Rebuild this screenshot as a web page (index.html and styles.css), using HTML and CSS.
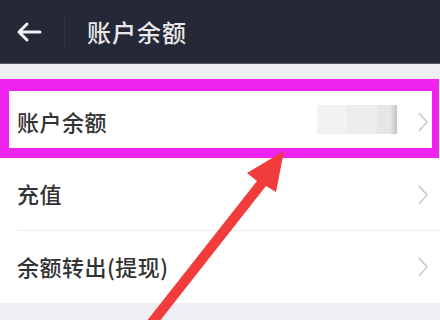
FILE: index.html
```html
<!DOCTYPE html>
<html lang="zh">
<head>
<meta charset="utf-8">
<link rel="stylesheet" href="styles.css">
</head>
<body>
<div class="page">
  <header class="topbar">
    <div class="back">
      <svg width="26" height="22" viewBox="0 0 26 22"><path d="M24 11H3M11 3L3 11L11 19" fill="none" stroke="#f2f2f2" stroke-width="3" stroke-linecap="round" stroke-linejoin="round"/></svg>
    </div>
    <div class="sep"></div>
    <div class="title">账户余额</div>
  </header>
  <div class="strip"></div>
  <ul class="list">
    <li class="row first">
      <span class="label">账户余额</span>
      <span class="blur"><i class="b1"></i><i class="b2"></i><i class="b3"></i></span>
      <svg class="chev" width="12" height="22" viewBox="0 0 12 22"><path d="M2 2L10 11L2 20" fill="none" stroke="#c9c9cc" stroke-width="1.6"/></svg>
      <div class="highlight"></div>
    </li>
    <li class="row divided">
      <span class="label">充值</span>
      <svg class="chev" width="12" height="22" viewBox="0 0 12 22"><path d="M2 2L10 11L2 20" fill="none" stroke="#c9c9cc" stroke-width="1.6"/></svg>
    </li>
    <li class="row">
      <span class="label">余额转出(提现)</span>
      <svg class="chev" width="12" height="22" viewBox="0 0 12 22"><path d="M2 2L10 11L2 20" fill="none" stroke="#c9c9cc" stroke-width="1.6"/></svg>
    </li>
  </ul>
  <svg class="arrow" width="440" height="320" viewBox="0 0 440 320"><polygon points="284,151 276,192 266,186 159,322 146,322 257,181 247,173" fill="#f23b3b"/></svg>
</div>
</body>
</html>
```

FILE: styles.css
```css
html, body {
  margin: 0;
  padding: 0;
}
body {
  width: 440px;
  height: 320px;
  overflow: hidden;
  background: #efeff3;
  font-family: "Noto Sans CJK SC", "Noto Sans", sans-serif;
}
.page {
  position: relative;
  width: 440px;
  height: 320px;
}
.topbar {
  height: 64px;
  background: #252937;
  display: flex;
  align-items: center;
  border-bottom: 1px solid #55586a;
  box-sizing: border-box;
}
.back {
  width: 64px;
  display: flex;
  justify-content: flex-start;
  padding-left: 16px;
  box-sizing: border-box;
}
.sep {
  width: 1px;
  height: 36px;
  background: #30344a;
}
.title {
  margin-left: 22px;
  color: #e8e8ea;
  font-size: 24px;
  font-weight: 500;
  letter-spacing: 1px;
}
.strip {
  height: 22px;
}
.list {
  list-style: none;
  margin: 0;
  padding: 0;
  background: #fff;
}
.row {
  position: relative;
  height: 72px;
  display: flex;
  align-items: center;
  padding: 0 11px 0 17px;
}
.row.divided::after {
  content: "";
  position: absolute;
  left: 17px;
  right: 0;
  bottom: 0;
  height: 1px;
  background: #ececee;
}
.row.divided {
  height: 73px;
  box-sizing: border-box;
}
.label {
  flex: 1;
  font-size: 22px;
  font-weight: 500;
  color: #333;
  letter-spacing: 0.5px;
  margin-bottom: 3px;
}
.blur {
  display: flex;
  height: 29px;
  margin-right: 20px;
  margin-bottom: 6px;
}
.blur i {
  display: block;
  height: 100%;
}
.b1 { width: 30px; background: #f2f2f2; }
.b2 { width: 30px; background: #ececec; }
.b3 { width: 20px; background: linear-gradient(90deg, #e6e6e6 65%, #c4c4c4); }
.chev {
  display: block;
}
.highlight {
  position: absolute;
  left: 0;
  top: -7px;
  width: 439px;
  height: 79px;
  box-sizing: border-box;
  border-style: solid;
  border-color: #ef22ef;
  border-width: 12px 7px 10px 9px;
}
.arrow {
  position: absolute;
  left: 0;
  top: 0;
  pointer-events: none;
}
```
